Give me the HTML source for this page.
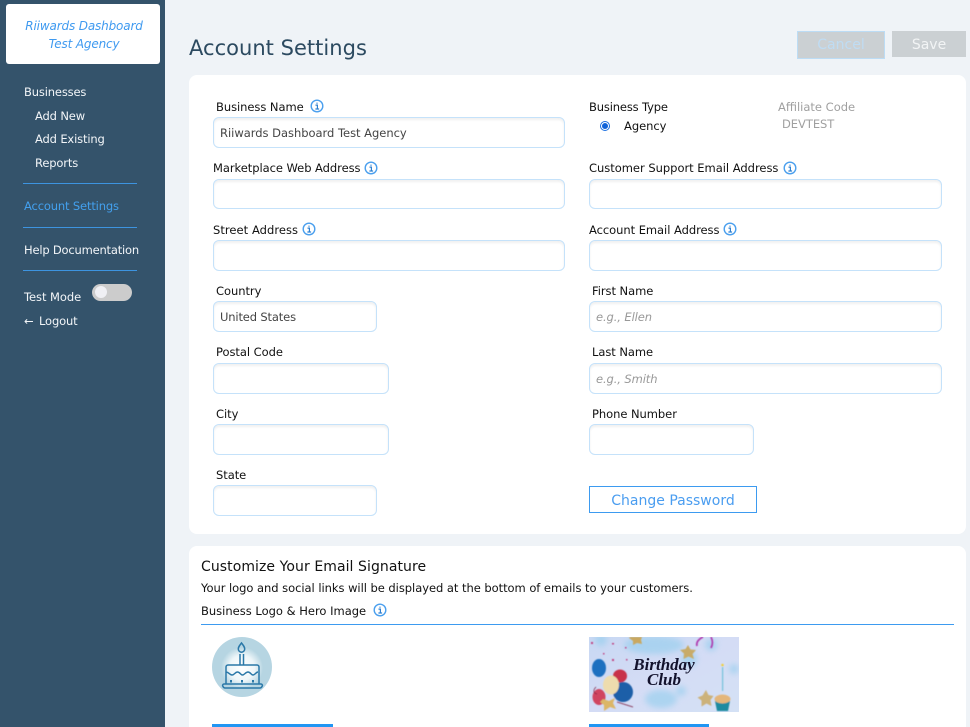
<!DOCTYPE html>
<html><head><meta charset="utf-8"><title>Account Settings</title>
<style>
html,body{margin:0;padding:0;width:970px;height:727px;overflow:hidden;background:#eff3f7}
body{position:relative;font-family:"DejaVu Sans","Liberation Sans",sans-serif;font-size:11.5px;color:#111}
div,a,span.t,svg.i{position:absolute;white-space:nowrap}
.t{line-height:14px;letter-spacing:-.05px}
#side{left:0;top:0;width:165px;height:727px;background:#34536b}
.s{color:#f2f5f8;letter-spacing:-.15px}
.hr{left:23px;width:114px;height:1px;background:#3d94e0}
.card{background:#fff;border-radius:8px}
.in{box-sizing:border-box;border:1px solid #c5e2fa;border-radius:6px;background:#fff;box-shadow:inset 0 2px 2px #f0f0f0;color:#444;padding-left:6px;letter-spacing:-.1px}
.ph{color:#999;font-style:italic}
</style></head><body>
<div id="side"></div>
<div style="left:6px;top:4px;width:154px;height:60px;background:#fff;border-radius:3px"></div>
<div class="t" style="left:7px;width:154px;top:19px;text-align:center;font-style:italic;color:#3f9af0;font-size:12px;letter-spacing:-.15px">Riiwards Dashboard</div>
<div class="t" style="left:7px;width:154px;top:37px;text-align:center;font-style:italic;color:#3f9af0;font-size:12px;letter-spacing:-.15px">Test Agency</div>
<div class="t s" style="left:24px;top:85px">Businesses</div>
<div class="t s" style="left:35px;top:109px">Add New</div>
<div class="t s" style="left:35px;top:132px">Add Existing</div>
<div class="t s" style="left:35px;top:156px">Reports</div>
<div class="hr" style="top:183px"></div>
<div class="t" style="left:24px;top:199px;color:#43a0ee;letter-spacing:-.15px">Account Settings</div>
<div class="hr" style="top:227px"></div>
<div class="t s" style="left:24px;top:243px;letter-spacing:-.2px">Help Documentation</div>
<div class="hr" style="top:270px"></div>
<div class="t s" style="left:24px;top:290px;letter-spacing:-.05px">Test Mode</div>
<div style="left:92px;top:284px;width:40px;height:17px;border-radius:9px;background:#ccc"></div>
<div style="left:95px;top:286px;width:12px;height:12px;border-radius:50%;background:#f0f0f4"></div>
<div class="t s" style="left:24px;top:314px">←</div>
<div class="t s" style="left:39px;top:314px">Logout</div>

<div class="t" style="left:189px;top:34px;line-height:28px;font-size:21px;color:#2c4a60;letter-spacing:.02px">Account Settings</div>
<div style="box-sizing:border-box;left:797px;top:31px;width:88px;height:28px;background:#cbd0d3;border:1px solid #bcdcf5;color:#bfdcf3;text-align:center;line-height:27px;font-size:14px">Cancel</div>
<div style="left:892px;top:31px;width:74px;height:26px;background:#cbd0d3;color:#f2f4f5;text-align:center;line-height:28px;font-size:14px">Save</div>

<div class="card" style="left:189px;top:75px;width:777px;height:459px"></div>
<div class="card" style="left:189px;top:546px;width:777px;height:190px"></div>

<div class="t" style="left:216px;top:100px">Business Name</div>
<div class="in" style="left:213px;top:117px;width:352px;height:31px;line-height:31px;letter-spacing:-.02px">Riiwards Dashboard Test Agency</div>
<div class="t" style="left:213px;top:161px">Marketplace Web Address</div>
<div class="in" style="left:213px;top:179px;width:352px;height:30px"></div>
<div class="t" style="left:213px;top:223px;letter-spacing:.05px">Street Address</div>
<div class="in" style="left:213px;top:240px;width:352px;height:31px"></div>
<div class="t" style="left:216px;top:284px">Country</div>
<div class="in" style="left:213px;top:301px;width:164px;height:31px;line-height:31px;letter-spacing:-.15px">United States</div>
<div class="t" style="left:216px;top:345px">Postal Code</div>
<div class="in" style="left:213px;top:363px;width:176px;height:31px"></div>
<div class="t" style="left:216px;top:407px">City</div>
<div class="in" style="left:213px;top:424px;width:176px;height:31px"></div>
<div class="t" style="left:216px;top:468px">State</div>
<div class="in" style="left:213px;top:485px;width:164px;height:31px"></div>

<div class="t" style="left:589px;top:100px;letter-spacing:-.15px">Business Type</div>
<div style="box-sizing:border-box;left:600px;top:121px;width:10px;height:10px;border-radius:50%;border:1px solid #1a6fe0;background:#fff"></div>
<div style="left:602px;top:123px;width:6px;height:6px;border-radius:50%;background:#0f62d8"></div>
<div class="t" style="left:624px;top:119px">Agency</div>
<div class="t" style="left:778px;top:100px;color:#a0a0a0;letter-spacing:0">Affiliate Code</div>
<div class="t" style="left:782px;top:117px;color:#a0a0a0">DEVTEST</div>
<div class="t" style="left:589px;top:161px;letter-spacing:-.02px">Customer Support Email Address</div>
<div class="in" style="left:589px;top:179px;width:353px;height:30px"></div>
<div class="t" style="left:589px;top:223px">Account Email Address</div>
<div class="in" style="left:589px;top:240px;width:353px;height:31px"></div>
<div class="t" style="left:592px;top:284px">First Name</div>
<div class="in ph" style="left:589px;top:301px;width:353px;height:31px;line-height:31px;color:#999">e.g., Ellen</div>
<div class="t" style="left:592px;top:345px">Last Name</div>
<div class="in ph" style="left:589px;top:363px;width:353px;height:31px;line-height:31px;color:#999">e.g., Smith</div>
<div class="t" style="left:592px;top:407px">Phone Number</div>
<div class="in" style="left:589px;top:424px;width:165px;height:31px"></div>
<div style="box-sizing:border-box;left:589px;top:486px;width:168px;height:27px;border:1px solid #3d9bf0;color:#4a9df0;text-align:center;line-height:28px;font-size:14px">Change Password</div>

<div class="t" style="left:201px;top:559px;font-size:14px;line-height:16px;letter-spacing:.07px">Customize Your Email Signature</div>
<div class="t" style="left:201px;top:581px;letter-spacing:-.04px">Your logo and social links will be displayed at the bottom of emails to your customers.</div>
<div class="t" style="left:201px;top:604px;letter-spacing:0">Business Logo &amp; Hero Image</div>
<div style="left:201px;top:624px;width:753px;height:1px;background:#3d9bf0"></div>

<svg class="i" style="left:0;top:0" width="970" height="727" viewBox="0 0 970 727">
<defs>
<g id="inf" fill="none"><circle r="5.8" stroke="#4a9fee" stroke-width="1.4"/><path d="M-1.5-.9H.4V2.8M-1.6 3H2.100M0-3.400v1.200" stroke="#2f80d0" stroke-width="1.200"/></g>
<radialGradient id="cg" cx=".5" cy=".5" r=".5"><stop offset="0" stop-color="#fff"/><stop offset=".6" stop-color="#eef6f9"/><stop offset="1" stop-color="#b6d5e2"/></radialGradient>
<linearGradient id="hg" x1="0" y1="0" x2="1" y2="1"><stop offset="0" stop-color="#c8d8f3"/><stop offset=".5" stop-color="#d4dcf5"/><stop offset="1" stop-color="#d4e1f5"/></linearGradient>
<filter id="b3" x="-20%" y="-20%" width="140%" height="140%"><feGaussianBlur stdDeviation="3"/></filter>
<filter id="b1" x="-10%" y="-10%" width="120%" height="120%"><feGaussianBlur stdDeviation=".5"/></filter>
</defs>
<use href="#inf" x="317" y="106"/><use href="#inf" x="371" y="168"/><use href="#inf" x="309" y="229"/>
<use href="#inf" x="790" y="168"/><use href="#inf" x="730" y="229"/><use href="#inf" x="380" y="610"/>
<circle cx="242" cy="667" r="30" fill="#b6d5e2"/><circle cx="242" cy="668" r="21" fill="url(#cg)"/>
<g fill="none" stroke="#2a78a8" stroke-width="1.500">
<path d="M241.500 643c-2 2.500-3.200 4-3.200 6a3.200 3.200 0 0 0 6.400 0c0-2-1.200-3.500-3.200-6zM240 654v11M243.500 654v11"/>
<path d="M226 684v-17a2 2 0 0 1 2-2h29a2 2 0 0 1 2 2v17M226 672c3 0 3.500 3 6 3s3-3 5.500-3 3 3 5 3 3-3 5.500-3 3 3 5 3 3-3 5-3M224 684h37a1.500 1.500 0 0 1 1 2.500c-.5 1-1 1.500-2 1.500h-35c-1 0-1.500-.5-2-1.500a1.500 1.500 0 0 1 1-2.500z"/>
</g>
<g fill="#2a78a8"><rect x="230" y="680" width="2" height="2.500"/><rect x="241" y="680" width="2" height="2.500"/><rect x="252" y="680" width="2" height="2.500"/></g>

<svg x="589" y="637" width="150" height="75" viewBox="0 0 150 75">
<rect width="150" height="75" fill="url(#hg)"/>
<g fill="#97cfee" opacity=".65" filter="url(#b3)"><ellipse cx="65" cy="8" rx="30" ry="9"/><circle cx="100" cy="22" r="8"/><ellipse cx="72" cy="62" rx="16" ry="9"/><circle cx="12" cy="3" r="6"/><circle cx="145" cy="32" r="5"/><circle cx="122" cy="8" r="6"/><circle cx="92" cy="54" r="5"/></g>
<g filter="url(#b1)">
<path d="M108 9c-1-4 2-7 6-9M122 0c2 4 2 7 0 11" fill="none" stroke="#b03cb0" stroke-width="1.800"/>
<path d="M41 0h12l-1 3 1 4-5-1-4 2v-4l-4-3z" fill="#c9a860"/>
<path d="M99 8l2.500 4.500 5.500.5-3.500 4 1.500 5-5.500-2.500-5 2.500.5-5.500-4-3.500 5.500-1z" fill="#c8ab68"/>
<path d="M117 53l2.500 5 5 1-3 4 1 6-5-2.500-5 3 0-6-4-3 5-2z" fill="#ccb27a"/>
<path d="M126 64h15l-2 10h-11z" fill="#1f8ba0"/><ellipse cx="133.500" cy="62" rx="8" ry="4.500" fill="#e4b67a"/>
<rect x="133" y="30" width="1.200" height="24" fill="#76c2dc"/><circle cx="133.500" cy="28" r="1.300" fill="#f0d040"/>
<ellipse cx="10" cy="31" rx="7" ry="9" fill="#1f6fc0"/>
<ellipse cx="31" cy="39" rx="7" ry="6.500" fill="#c83048"/>
<ellipse cx="34" cy="55" rx="10" ry="10" fill="#1d5fa8"/>
<ellipse cx="22" cy="48" rx="8" ry="9.500" fill="#eedcae"/>
<ellipse cx="10" cy="60" rx="6.500" ry="8" fill="#d04560"/>
<path d="M14 62l6 2 6-3-2 5 3 6-6-2-6 4 0-6-4-3z" fill="#dbb668"/>
<path d="M28 65l16 5M7 50c-3 3-3 6 1 7" fill="none" stroke="#7a2040" stroke-width=".7"/>
<g fill="#c04080"><rect x="2" y="5" width="2" height="2"/><rect x="23" y="6" width="2" height="1.500"/><rect x="36" y="10" width="1.500" height="1.500"/><rect x="23" y="22" width="2" height="2"/><rect x="14" y="16" width="1.500" height="1.500"/><rect x="37" y="22" width="1.500" height="1.500"/></g>
</g>
<text x="75" y="33" text-anchor="middle" font-family="Liberation Serif,serif" font-weight="bold" font-style="italic" font-size="17" fill="#12122c">Birthday</text>
<text x="75" y="48" text-anchor="middle" font-family="Liberation Serif,serif" font-weight="bold" font-style="italic" font-size="17" fill="#12122c">Club</text>
</svg>
</svg>
<div style="left:212px;top:724px;width:121px;height:3px;background:#2196f3"></div>
<div style="left:589px;top:724px;width:120px;height:3px;background:#2196f3"></div>
</body></html>
